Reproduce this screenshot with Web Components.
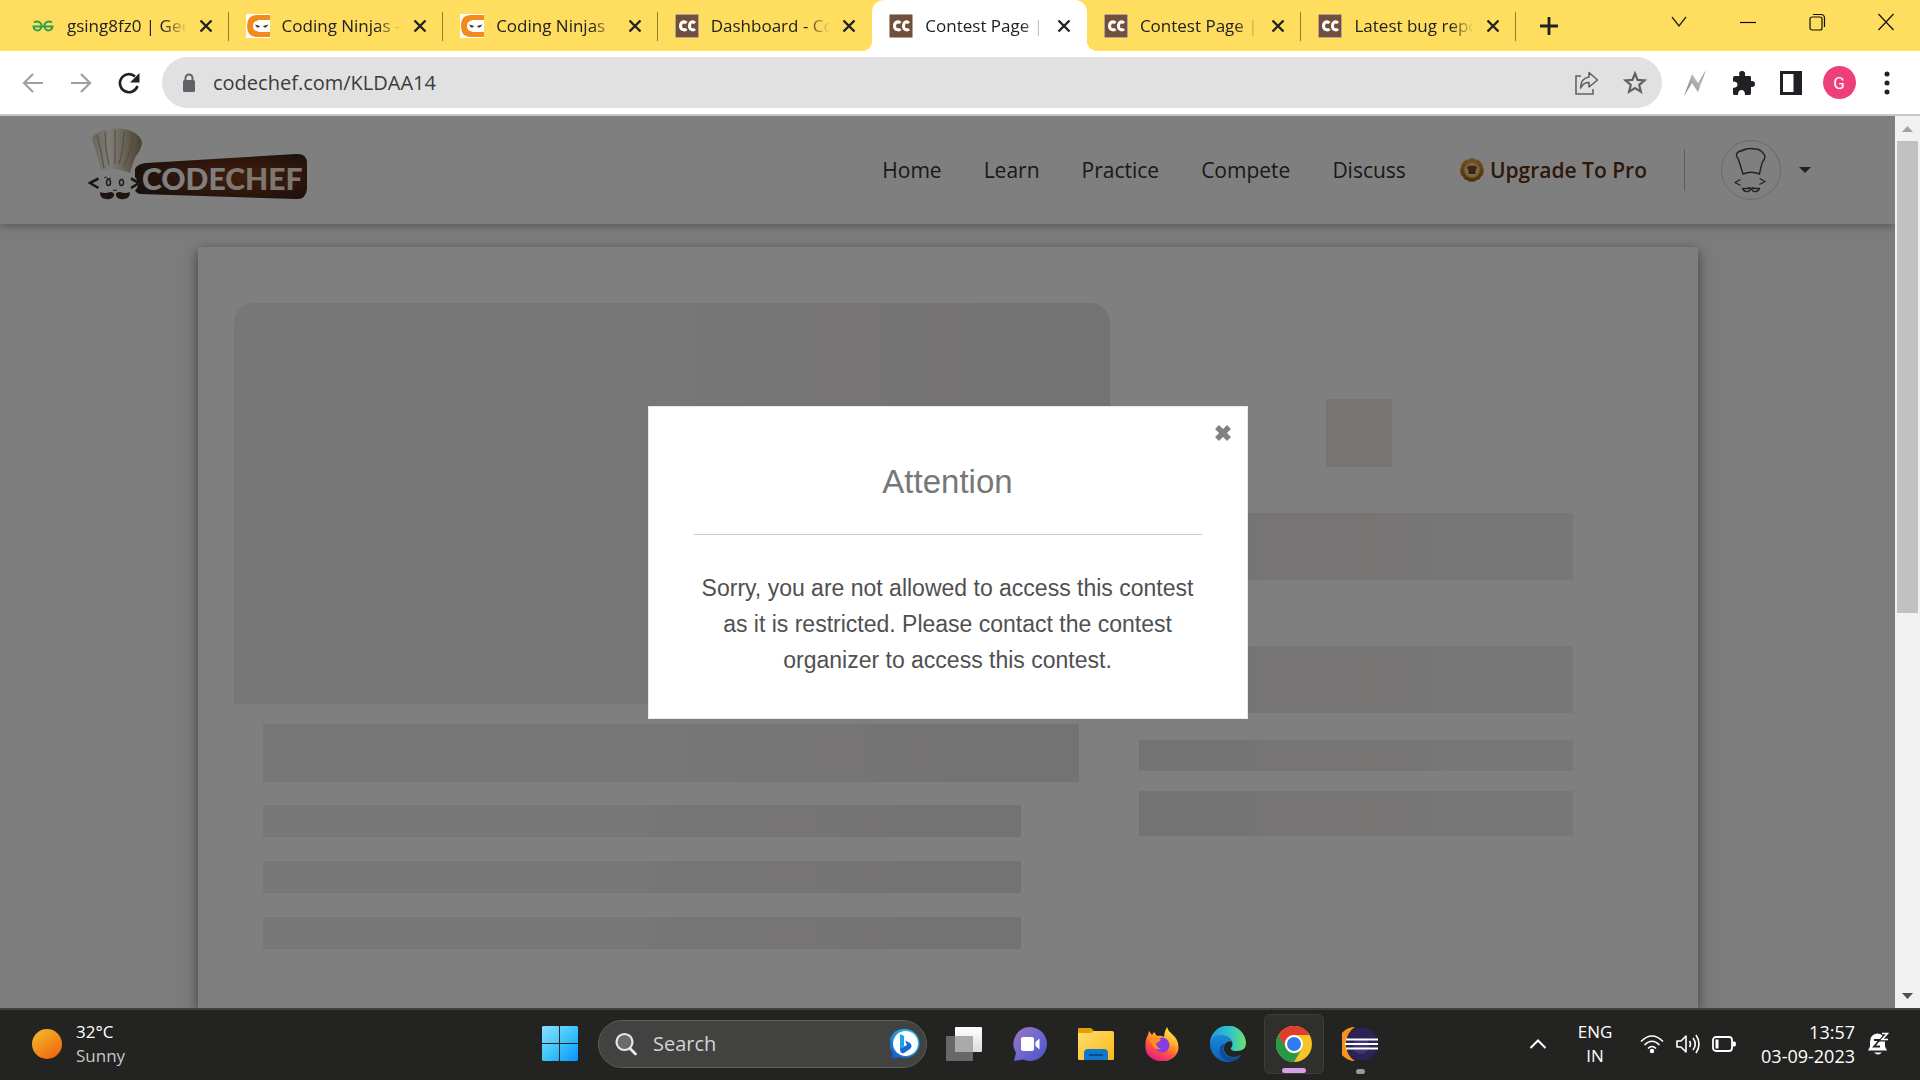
<!DOCTYPE html>
<html lang="en">
<head>
<meta charset="UTF-8">
<meta name="viewport" content="width=device-width, initial-scale=1.0">
<title>Contest Page | CodeChef</title>
<style>
    html, body {
        margin: 0;
        height: 100%;
        overflow: hidden;
    }

    body {
        display: flex;
        flex-direction: column;
        font-family: "Open Sans", "Noto Sans", sans-serif;
        font-size: 17px;
        color: #202124;
    }

    page-view {
        flex: 1;
        min-height: 0;
    }
</style>
</head>
<body>
    <tab-strip>
        <browser-tab icon="geeks">gsing8fz0 | Gee</browser-tab>
        <browser-tab icon="ninja">Coding Ninjas -</browser-tab>
        <browser-tab icon="ninja">Coding Ninjas</browser-tab>
        <browser-tab icon="cc" borderless>Dashboard - Co</browser-tab>
        <browser-tab icon="cc" active>Contest Page |</browser-tab>
        <browser-tab icon="cc">Contest Page |</browser-tab>
        <browser-tab icon="cc">Latest bug repo</browser-tab>
    </tab-strip>
    <browser-toolbar url="codechef.com/KLDAA14"></browser-toolbar>
    <page-view>
        <site-header></site-header>
        <contest-skeleton></contest-skeleton>
        <alert-dialog slot="overlay" titulo="Attention">Sorry, you are not allowed to access this contest as it is restricted. Please contact the contest organizer to access this contest.</alert-dialog>
    </page-view>
    <task-bar></task-bar>

<script>
/* Each entry: width, height, inner markup */
const ICONS = {
    geeks: [24, 24, `
        <g fill="none" stroke="#2f9e4f" stroke-width="2">
            <path d="M3 8.500Q6 6.500 9 8.500Q11 10 10.500 12Q10 16 7 16.500Q3 16.500 2.500 12.500H21.500Q21 16.500 17 16.500Q14 16 13.500 12Q13 10 15 8.500Q18 6.500 21 8.500"/>
        </g>`],
    ninja: [24, 24, `
        <path fill="#fff" d="M0 0h24v24H0z"/>
        <path fill="#f28a1c" d="M24 1H11Q1 1 1 12T11 23h13v-5H12V6h12z"/>
        <path fill="#fff" d="M24 6.500H13Q7 6.500 7 12T13 17.500H24z"/>
        <path fill="#333" d="M9 10.500l5 1.500q-1 2-3 1.500zM22.500 10.500L17 12q1 2 3 1.500z"/>`],
    cc: [24, 24, `
        <rect x=".5" y=".5" width="23" height="23" rx="1" fill="#70503c" stroke="#b7a294"/>
        <g fill="none" stroke="#fff" stroke-width="3">
            <path d="M11.500 9Q10 7.500 8 8Q5.500 9 5.500 12T8 15.500Q10 16.500 11.500 15"/>
            <path d="M20 9Q18.500 7.500 16.500 8Q14.500 9 14.500 12T16.500 15.500Q18.500 16.500 20 15"/>
        </g>`],
    close: [14, 14, `<path d="M1.500 1.500l11 11M12.500 1.500l-11 11" stroke="#202124" stroke-width="2.400"/>`],
    plus: [20, 20, `<path d="M10 1v18M1 10h18" stroke="#202124" stroke-width="2.800"/>`],
    chevron: [16, 12, `<path d="M1 1l7 9 7-9" fill="none" stroke="#202124" stroke-width="1.300"/>`],
    minimize: [16, 16, `<path d="M0 8.500h16" stroke="#111" stroke-width="1.200"/>`],
    restore: [18, 20, `
        <rect x="2" y="5" width="12" height="13" rx="2" fill="none" stroke="#111" stroke-width="1.200"/>
        <path d="M5 2.500h8q3.500 0 3.500 4V15" fill="none" stroke="#111" stroke-width="1.200"/>`],
    exit: [18, 18, `<path d="M1.500 1l15 16M16.500 1l-15 16" stroke="#111" stroke-width="1.200"/>`],
    back: [24, 24, `<path d="M22 12H3M12 3l-9 9 9 9" fill="none" stroke="#a0a0a0" stroke-width="2.200"/>`],
    forward: [24, 24, `<path d="M2 12h19M12 3l9 9-9 9" fill="none" stroke="#a0a0a0" stroke-width="2.200"/>`],
    reload: [24, 24, `
        <path d="M20.500 15A9 9 0 1 1 18 5.500" fill="none" stroke="#202124" stroke-width="2.600"/>
        <path d="M22.500 2v9.500H13z" fill="#202124"/>`],
    lock: [24, 24, `
        <rect x="6" y="9" width="12" height="12" rx="1.500" fill="#5f6368"/>
        <path d="M8.500 9V7a3.500 3.500 0 0 1 7 0v2" fill="none" stroke="#5f6368" stroke-width="2"/>`],
    share: [26, 26, `
        <g fill="none" stroke="#5f6368" stroke-width="1.600">
            <path d="M7 6H2v18h17v-5"/>
            <path d="M15 2.500L23.500 10 15 17v-4.500Q10 12 6.500 18Q7 8 15 7z" stroke-linejoin="round"/>
        </g>`],
    star: [24, 24, `<path d="M12 2.500l2.600 6.400 6.900.5-5.300 4.500 1.700 6.800L12 17l-5.900 3.700 1.700-6.800L2.500 9.400l6.900-.5z" fill="none" stroke="#5f6368" stroke-width="2.200"/>`],
    bolt: [24, 28, `
        <defs><linearGradient id="g" x1="0" y1="1" x2="1" y2="0"><stop offset="0" stop-color="#777"/><stop offset=".6" stop-color="#b8b8b8"/><stop offset="1" stop-color="#888"/></linearGradient></defs>
        <path d="M1 27L9 5l6 9L23 1 15 23l-6-9z" fill="url(#g)"/>`],
    puzzle: [24, 26, `<path d="M4 6h4.500Q7 1 11 1t3 5H19q1 0 1 1.500V11q4-.5 4 3t-4 3v6q0 2-1.500 2H14q0-5-3.500-5T7 25H3.500Q2 25 2 23.500V18q4.500-.5 4.500-3.500T2 11.500V8q0-2 2-2z" fill="#202124"/>`],
    panel: [22, 24, `
        <path d="M0 0h22v24H0z" fill="#202124"/>
        <path d="M3 3h10.500v18H3z" fill="#fff"/>`],
    dots: [6, 24, `<g fill="#202124"><circle cx="3" cy="3" r="2.500"/><circle cx="3" cy="12" r="2.500"/><circle cx="3" cy="21" r="2.500"/></g>`],
    medal: [24, 24, `
        <defs><linearGradient id="g" x1="0" y1="0" x2="0" y2="1"><stop offset="0" stop-color="#f0a040"/><stop offset="1" stop-color="#9a5d10"/></linearGradient></defs>
        <path d="M12 0q2 0 3.500 1.500Q19 1 20.500 4 23 5.500 22.500 8.500 24.500 11 23.500 13.500 24 17 21 18.500 20 22 16.500 22 14.500 24.500 12 23.500 8.500 24.500 7 22 4 22 3 18.500 0 17 .5 13.500-.5 11 1.500 8.500 1 5.500 3.500 4 5 1 8.500 1.500 10 0 12 0z" fill="url(#g)"/>
        <circle cx="12" cy="12" r="8" fill="#e0bb78"/>
        <circle cx="12" cy="12" r="6.500" fill="#f0d8a8"/>
        <path d="M7 9.500q2-3 5-1.500 3-1.500 5 1.500l-1.500 3V16h-7v-3.500z" fill="#7d4a18"/>`],
    chef: [60, 60, `
        <g fill="none" stroke="#444" stroke-width="1.400" stroke-linejoin="round">
            <circle cx="30" cy="30" r="29.500" stroke="#d4d4d4" stroke-width="1"/>
            <path d="M22 34L17.500 19.500Q13 14 18 11.500Q22 10.500 25 9Q30 8 34 9Q39 9 42 13Q46 17 41.500 22Q40 26 38.500 34Q30 30.500 22 34z"/>
            <path d="M19.500 39.500l-5.500 3 5.500 3M38.500 38.500l5.500 3-5.500 3"/>
            <path d="M21.500 48.500h4.500l3-.8q1 2.500-2 3.800-4 .8-5.500-3zM38.500 48.500H34l-3-.8q-1 2.500 2 3.800 4 .8 5.500-3z"/>
        </g>`],
    caret: [12, 6, `<path d="M0 0h12L6 6z" fill="#444"/>`],
    cross: [18, 18, `<path d="M3 3l12 12M15 3L3 15" stroke="#818181" stroke-width="5.500"/>`],
    logo: [220, 74, `
        <defs>
            <radialGradient id="g" cx=".6" cy=".5" r=".6"><stop offset="0" stop-color="#803c1a"/><stop offset=".5" stop-color="#663018"/><stop offset="1" stop-color="#38231a"/></radialGradient>
            <linearGradient id="h"><stop offset="0" stop-color="#d6cdb4"/><stop offset=".35" stop-color="#fbf9f0"/><stop offset=".6" stop-color="#d8cfba"/><stop offset="1" stop-color="#96835e"/></linearGradient>
        </defs>
        <path d="M47 42Q49 37 58 36L208 27Q218 26 219 35V62Q218 72 209 72L52 67Q46 66 47 60z" fill="url(#g)"/>
        <ellipse cx="27" cy="57" rx="23" ry="14" fill="#fff"/>
        <path d="M13 42L5 15Q2 8 11 5Q17 2 27 1.300Q38 1 45 5Q53 9 54 16Q53 23 48 29Q44 37 42 46Q26 39 13 44z" fill="url(#h)"/>
        <path d="M9 8q4 14 7 33M17 5q0 18 4 33M27 3v34M36 5q0 16-5 32M45 7q-2 18-9 32" fill="none" stroke="#a5977a" stroke-width="1"/>
        <g fill="none" stroke="#3b2a25" stroke-width="2.600"><path d="M10.500 51.500L2 56l8.500 5M43 51.500l8 4.500-8 5"/></g>
        <g fill="#fff" stroke="#3b3735" stroke-width="1.500"><ellipse cx="20.500" cy="55.500" rx="2" ry="3"/><ellipse cx="33.500" cy="55.500" rx="2" ry="3"/></g>
        <path d="M16 51q2-2 3 0t4 0M25 63q2 1 4 0" fill="none" stroke="#3b3735"/>
        <path d="M12 65q5 2 10 0 5 0 4 4-3 4-8 3-6 0-6-7zM42 65q-5 2-10 0-5 0-4 4 3 4 8 3 6 0 6-7z" fill="#3d2620"/>
        <text x="54" y="63" font-family="Lato, sans-serif" font-weight="900" font-size="30" fill="#fff">CODE<tspan fill="#f6f3df">CHEF</tspan></text>`],
    sun: [30, 30, `
        <defs><linearGradient id="g" x1="0" y1="0" x2=".7" y2="1"><stop offset="0" stop-color="#f2c02e"/><stop offset="1" stop-color="#f2680f"/></linearGradient></defs>
        <circle cx="15" cy="15" r="15" fill="url(#g)"/>`],
    windows: [36, 36, `
        <defs><linearGradient id="g" x1="0" y1="0" x2="1" y2="1"><stop offset="0" stop-color="#8ce0ff"/><stop offset=".5" stop-color="#40c4fb"/><stop offset="1" stop-color="#0494fb"/></linearGradient></defs>
        <path d="M1 0h16v17H0V1zM18 0h17l1 1v16H18zM0 18h17v17H1l-1-1zM18 18h18v16l-1 1H18z" fill="url(#g)"/>`],
    magnifier: [24, 24, `
        <circle cx="10.500" cy="10" r="8" fill="#6a6a6a" stroke="#e6e9f0" stroke-width="2.200"/>
        <path d="M16 16.500l5.500 5.500" stroke="#e6e9f0" stroke-width="2.800" stroke-linecap="round"/>`],
    bing: [30, 30, `
        <defs><linearGradient id="g" x1="1" y1="0" x2="0" y2="1"><stop offset="0" stop-color="#2fd0f2"/><stop offset="1" stop-color="#0f52cf"/></linearGradient></defs>
        <path d="M15 0a15 14.500 0 1 1-6 28Q5 30 1 29q2-3 1-6A15 14.500 0 0 1 15 0z" fill="url(#g)"/>
        <circle cx="15.500" cy="14.500" r="12.500" fill="#fff"/>
        <path d="M10 5l4 2v10l-4 4z" fill="#1ba4ee"/>
        <path d="M10 20l5-3 2-1-2-4.500 5 2.500q3 3 0 6l-6 4q-4 1-4-4z" fill="#1768d8"/>`],
    taskview: [36, 34, `
        <defs><linearGradient id="g" x1="0" y1="0" x2="0" y2="1"><stop offset="0" stop-color="#fff"/><stop offset="1" stop-color="#dcdcdc"/></linearGradient></defs>
        <rect x="0" y="9" width="27" height="25" rx="1" fill="#686868"/>
        <rect x="9" y="0" width="27" height="25" rx="1" fill="url(#g)"/>
        <path d="M9 9h18v16H9z" fill="#aaa"/>`],
    chat: [34, 34, `
        <defs><linearGradient id="g" x1="0" y1="0" x2="1" y2="1"><stop offset="0" stop-color="#a573c0"/><stop offset=".5" stop-color="#6f68cf"/><stop offset="1" stop-color="#4a52c4"/></linearGradient></defs>
        <path d="M17 0a17 17 0 1 1-7 32.500L1 34l2-8A17 17 0 0 1 17 0z" fill="url(#g)"/>
        <rect x="8" y="10" width="13" height="14" rx="2" fill="#fff"/>
        <path d="M22.500 15l4-3.500v11l-4-3.500z" fill="#fff"/>`],
    folder: [36, 34, `
        <defs><linearGradient id="g" x1="0" y1="0" x2="1" y2="1"><stop offset="0" stop-color="#ffdc72"/><stop offset="1" stop-color="#fcb913"/></linearGradient></defs>
        <path d="M0 6V2q0-1 1-1h12l3 3v4z" fill="#e3a008"/>
        <path d="M0 6h13l3-2h18q2 0 2 2v26q0 1-1 1H1q-1 0-1-1z" fill="url(#g)"/>
        <path d="M6 33v-7q0-4 4-4h16q4 0 4 4v7z" fill="#1178cc"/>
        <path d="M11 28h14" stroke="#0b4d8c" stroke-width="2"/>`],
    firefox: [34, 34, `
        <defs>
            <linearGradient id="g" x1=".8" y1="0" x2=".3" y2="1"><stop offset="0" stop-color="#fff04a"/><stop offset=".35" stop-color="#ffb42e"/><stop offset=".65" stop-color="#ff5a38"/><stop offset="1" stop-color="#e3178a"/></linearGradient>
        </defs>
        <path d="M22 0q1 4 5 7 7 6 6.500 14A16.500 14 0 0 1 .5 20Q0 12 3 8l1-4 3 4 2-3 3 4q4-1 7 1 0-5 3-10z" fill="url(#g)"/>
        <circle cx="17" cy="18" r="7.500" fill="#8a3be2"/>
        <path d="M3 11q6-3 13 1-1 3-5 4 0 4 5 6-7 2-9-5z" fill="#ff8d1f"/>`],
    edge: [36, 36, `
        <defs>
            <linearGradient id="g"><stop offset="0" stop-color="#1c9ade"/><stop offset=".6" stop-color="#32c6c8"/><stop offset="1" stop-color="#6fe068"/></linearGradient>
            <linearGradient id="h" x1="0" y1="0" x2="0" y2="1"><stop offset="0" stop-color="#1a8ad8"/><stop offset="1" stop-color="#0e5fb5"/></linearGradient>
        </defs>
        <path d="M0 18A18 18 0 0 1 36 17q0 8-9 8-7 0-6-3 3-4 0-8Q13 6 4 12z" fill="url(#g)"/>
        <path d="M0 18Q1 9 11 9q9 0 11 7-4-2-7 2-3 6 2 11 6 4 14 0Q25 36 18 36A18 18 0 0 1 0 18z" fill="url(#h)"/>
        <path d="M15 18q-4 7 2 12 6 4 15-1-6 8-15 6Q8 31 10 22q1-4 5-4z" fill="#124d91"/>`],
    chrome: [36, 36, `
        <circle cx="18" cy="18" r="18" fill="#f7c325"/>
        <path d="M2.400 9A18 18 0 0 1 33.600 9H18a9 9 0 0 0-8 13.500z" fill="#e23c2e"/>
        <path d="M2.400 9A18 18 0 0 0 18 36l8-13.500a9 9 0 0 1-15.800 0z" fill="#279847"/>
        <circle cx="18" cy="18" r="9" fill="#fff"/>
        <circle cx="18" cy="18" r="7" fill="#2d7df0"/>`],
    eclipse: [36, 34, `
        <path d="M13 0A17 17 0 0 0 13 34Q4 28 4 17T13 0z" fill="#f7941e"/>
        <ellipse cx="20" cy="17" rx="16" ry="16.500" fill="#2c2255"/>
        <circle cx="19" cy="19" r="8" fill="#41357a"/>
        <path d="M4 12.500h32M3 17h33M4 21.500h32" stroke="#fff" stroke-width="1.800"/>`],
    up: [18, 12, `<path d="M1.500 10L9 2.500l7.500 7.500" fill="none" stroke="#fff" stroke-width="2"/>`],
    wifi: [24, 20, `
        <g fill="none" stroke="#fff" stroke-width="1.600"><path d="M1 7.500q11-11 22 0M4.500 11q7.500-7.500 15 0M8 14.500q4-4 8 0"/></g>
        <circle cx="12" cy="17" r="2.200" fill="#fff"/>`],
    speaker: [24, 20, `<g fill="none" stroke="#fff" stroke-width="1.600" stroke-linejoin="round"><path d="M1 7h4l5-5v16l-5-5H1zM13.500 7q2 3 0 6M17 4q4.500 6 0 12M20 1q6 9 0 18"/></g>`],
    battery: [24, 18, `
        <rect x="1" y="2" width="19" height="14" rx="3" fill="none" stroke="#fff" stroke-width="1.800"/>
        <path d="M3.500 4.500h3v9h-3zM21 6.500h1.500q1.500 0 1.500 2.500t-1.500 2.500H21z" fill="#fff"/>`],
    bell: [22, 26, `
        <path d="M1 19.500l2-4V11q0-8 7.500-8.500Q18 3 18 11v4.500l2 4z" fill="#fff"/>
        <path d="M7 21.500h8q-4 4-8 0z" fill="#fff"/>
        <path d="M7 9h5.500L7 15.500h6" fill="none" stroke="#232321" stroke-width="1.800"/>
        <path d="M15 2.500h5.500L15 8.500h6" fill="none" stroke="#232321" stroke-width="4"/>
        <path d="M15 2.500h5.500L15 8.500h6" fill="none" stroke="#fff" stroke-width="1.600"/>`],
    scrollUp: [11, 6, `<path d="M0 6h11L5.500 0z" fill="#a3a3a3"/>`],
    scrollDown: [11, 6, `<path d="M0 0h11L5.500 6z" fill="#505050"/>`]
};

class UiIcon extends HTMLElement {
    constructor() {
        super();
        this.attachShadow({ mode: "open" });
    }

    connectedCallback() {
        const [w, h, markup] = ICONS[this.getAttribute("name")];
        this.shadowRoot.innerHTML = `
            <style>
                :host { display: block; flex: none; }
                svg { display: block; }
            </style>
            <svg width="${w}" height="${h}" viewBox="0 0 ${w} ${h}" aria-hidden="true">${markup}</svg>
        `;
    }
}
customElements.define("ui-icon", UiIcon);

/* Shared reset for the flat buttons inside each shadow root */
const BUTTON_CSS = `
    button {
        display: flex;
        align-items: center;
        justify-content: center;
        flex: none;
        margin: 0;
        padding: 0;
        border: none;
        background: none;
        font: inherit;
        color: inherit;
        cursor: pointer;
    }
`;

class BrowserTab extends HTMLElement {
    constructor() {
        super();
        const shadow = this.attachShadow({ mode: "open" });
        const icon = this.getAttribute("icon");

        shadow.innerHTML = `
            <style>
                ${BUTTON_CSS}
                :host {
                    display: flex;
                    flex: 1;
                    min-width: 0;
                    box-sizing: border-box;
                    align-items: center;
                    gap: 12px;
                    padding: 0 16px 0 17px;
                    position: relative;
                }

                /* separator on the right edge */
                :host::after {
                    content: "";
                    position: absolute;
                    right: 0;
                    top: 12px;
                    bottom: 10px;
                    width: 1px;
                    background: #8f7c35;
                }
                :host([borderless])::after { display: none; }

                .title {
                    flex: 1;
                    min-width: 0;
                    overflow: hidden;
                    white-space: nowrap;
                    -webkit-mask-image: linear-gradient(to left, transparent, #000 24px);
                    mask-image: linear-gradient(to left, transparent, #000 24px);
                }

                :host([active]) {
                    background: #fff;
                    border-radius: 12px 12px 0 0;
                }
                :host([active])::before,
                :host([active])::after {
                    content: "";
                    position: absolute;
                    top: auto;
                    bottom: 0;
                    width: 10px;
                    height: 10px;
                }
                :host([active])::before {
                    left: -10px;
                    background: radial-gradient(circle at 0 0, transparent 10px, #fff 10px);
                }
                :host([active])::after {
                    right: -10px;
                    background: radial-gradient(circle at 100% 0, transparent 10px, #fff 10px);
                }
            </style>
            <ui-icon name="${icon}"></ui-icon>
            <span class="title"><slot></slot></span>
            <button aria-label="Close tab"><ui-icon name="close"></ui-icon></button>
        `;
    }
}
customElements.define("browser-tab", BrowserTab);

class TabStrip extends HTMLElement {
    constructor() {
        super();
        const shadow = this.attachShadow({ mode: "open" });
        shadow.innerHTML = `
            <style>
                ${BUTTON_CSS}
                :host {
                    display: flex;
                    height: 51px;
                    padding-left: 14px;
                    background: #ffdd5e;
                }
                .tabs {
                    display: flex;
                    flex: 0 1 1502px;
                    min-width: 0;
                }
                .new { width: 66px; }
                .window {
                    display: flex;
                    height: 44px;
                    margin-left: auto;
                }
                .window button { width: 69px; }
            </style>
            <div class="tabs"><slot></slot></div>
            <button class="new" aria-label="New tab"><ui-icon name="plus"></ui-icon></button>
            <div class="window">
                <button aria-label="Search tabs"><ui-icon name="chevron"></ui-icon></button>
                <button aria-label="Minimize"><ui-icon name="minimize"></ui-icon></button>
                <button aria-label="Restore"><ui-icon name="restore"></ui-icon></button>
                <button aria-label="Close"><ui-icon name="exit"></ui-icon></button>
            </div>
        `;
    }
}
customElements.define("tab-strip", TabStrip);

class BrowserToolbar extends HTMLElement {
    constructor() {
        super();
        const shadow = this.attachShadow({ mode: "open" });
        const url = this.getAttribute("url") || "";

        shadow.innerHTML = `
            <style>
                ${BUTTON_CSS}
                :host {
                    display: flex;
                    align-items: center;
                    padding: 6px 9px;
                    background: #fff;
                    border-bottom: 2px solid #c8c8c8;
                }
                button { width: 48px; height: 48px; }
                .omnibox {
                    display: flex;
                    flex: 1;
                    align-items: center;
                    height: 51px;
                    margin: 0 9px;
                    padding: 0 3px 0 15px;
                    box-sizing: border-box;
                    border-radius: 26px;
                    background: #e1e1e1;
                }
                input {
                    flex: 1;
                    min-width: 0;
                    padding: 0 0 0 12px;
                    border: none;
                    outline: none;
                    background: none;
                    font: inherit;
                    font-size: 20px;
                    color: #3a3c40;
                }
                .avatar {
                    display: flex;
                    align-items: center;
                    justify-content: center;
                    width: 33px;
                    height: 33px;
                    border-radius: 50%;
                    background: #ee3f7a;
                    color: #fff;
                    font-family: Roboto, sans-serif;
                    font-size: 17px;
                }
            </style>
            <button aria-label="Back"><ui-icon name="back"></ui-icon></button>
            <button aria-label="Forward"><ui-icon name="forward"></ui-icon></button>
            <button aria-label="Reload"><ui-icon name="reload"></ui-icon></button>
            <div class="omnibox">
                <ui-icon name="lock"></ui-icon>
                <input type="text" aria-label="Address" value="${url}" spellcheck="false">
                <button aria-label="Share"><ui-icon name="share"></ui-icon></button>
                <button aria-label="Bookmark"><ui-icon name="star"></ui-icon></button>
            </div>
            <button aria-label="Extension"><ui-icon name="bolt"></ui-icon></button>
            <button aria-label="Extensions"><ui-icon name="puzzle"></ui-icon></button>
            <button aria-label="Side panel"><ui-icon name="panel"></ui-icon></button>
            <button aria-label="Profile"><span class="avatar">G</span></button>
            <button aria-label="Menu"><ui-icon name="dots"></ui-icon></button>
        `;
    }
}
customElements.define("browser-toolbar", BrowserToolbar);

/* Page area: content, dimmed overlay and scrollbar */
class PageView extends HTMLElement {
    constructor() {
        super();
        const shadow = this.attachShadow({ mode: "open" });
        shadow.innerHTML = `
            <style>
                ${BUTTON_CSS}
                :host { display: flex; }
                .page {
                    position: relative;
                    display: flex;
                    flex-direction: column;
                    flex: 1;
                    min-width: 0;
                    overflow: hidden;
                    background: #f8f8f8;
                }
                .overlay {
                    position: absolute;
                    inset: 0;
                    display: flex;
                    align-items: center;
                    justify-content: center;
                    background: rgba(0, 0, 0, 0.5);
                }
                .scroll {
                    display: flex;
                    flex-direction: column;
                    width: 25px;
                    background: #f1f1f1;
                }
                .scroll button { height: 25px; width: 100%; }
                .track { flex: 1; padding: 0 2px; }
                .thumb { height: 56%; background: #c1c1c1; }
            </style>
            <div class="page">
                <slot></slot>
                <div class="overlay"><slot name="overlay"></slot></div>
            </div>
            <div class="scroll">
                <button aria-label="Scroll up"><ui-icon name="scrollUp"></ui-icon></button>
                <div class="track"><div class="thumb"></div></div>
                <button aria-label="Scroll down"><ui-icon name="scrollDown"></ui-icon></button>
            </div>
        `;
    }
}
customElements.define("page-view", PageView);

class SiteHeader extends HTMLElement {
    constructor() {
        super();
        const shadow = this.attachShadow({ mode: "open" });
        shadow.innerHTML = `
            <style>
                ${BUTTON_CSS}
                :host {
                    display: flex;
                    align-items: center;
                    flex: none;
                    height: 108px;
                    padding: 0 84px 0 88px;
                    background: #fff;
                    box-shadow: 0 2px 8px rgba(0, 0, 0, 0.3);
                    font-size: 21px;
                }
                a { color: #333; text-decoration: none; }
                .logo { padding-bottom: 12px; }
                nav {
                    display: flex;
                    gap: 42px;
                    margin-left: auto;
                }
                .pro {
                    display: flex;
                    align-items: center;
                    gap: 6px;
                    margin-left: 54px;
                    color: #5b2f14;
                    font-weight: 600;
                }
                .rule {
                    width: 1px;
                    height: 42px;
                    margin: 0 36px 0 37px;
                    background: #bbb;
                }
                .account { gap: 18px; }
            </style>
            <a class="logo" href="#" aria-label="CodeChef"><ui-icon name="logo"></ui-icon></a>
            <nav>
                <a href="#">Home</a>
                <a href="#">Learn</a>
                <a href="#">Practice</a>
                <a href="#">Compete</a>
                <a href="#">Discuss</a>
            </nav>
            <a class="pro" href="#"><ui-icon name="medal"></ui-icon>Upgrade To Pro</a>
            <span class="rule"></span>
            <button class="account" aria-label="Account"><ui-icon name="chef"></ui-icon><ui-icon name="caret"></ui-icon></button>
        `;
    }
}
customElements.define("site-header", SiteHeader);

class ContestSkeleton extends HTMLElement {
    constructor() {
        super();
        const shadow = this.attachShadow({ mode: "open" });
        shadow.innerHTML = `
            <style>
                :host {
                    display: grid;
                    grid-template-columns: 876px 434px;
                    gap: 29px;
                    align-content: start;
                    flex: 1 0 auto;
                    box-sizing: border-box;
                    width: 1500px;
                    max-width: 100%;
                    margin: 23px auto 0;
                    padding: 56px 36px 0;
                    background: #fff;
                    box-shadow: 0 4px 12px rgba(0, 0, 0, 0.5);
                }
                div div {
                    background: linear-gradient(90deg, #eee 50%, #ede9e9 68%, #eae7e7 80%, #e7e7e7);
                }
                .main { display: flex; flex-direction: column; }
                .banner { height: 401px; border-radius: 20px 20px 0 0; }
                .heading { height: 58px; margin: 20px 31px 23px 29px; }
                .line { height: 32px; margin: 0 89px 24px 29px; }

                .side { display: flex; flex-direction: column; padding-top: 96px; }
                .side div { background: linear-gradient(90deg, #e8e8e8, #ece8e8 30%, #eee9e9 55%, #eee 70%); }
                .side .badge { width: 66px; height: 68px; margin: 0 0 46px 187px; background: #eee9e9; }
                .side .tall { height: 67px; margin-bottom: 66px; }
                .side .thin { height: 31px; margin: -39px 0 20px; }
                .side .mid { height: 45px; }
            </style>
            <div class="main">
                <div class="banner"></div>
                <div class="heading"></div>
                <div class="line"></div>
                <div class="line"></div>
                <div class="line"></div>
            </div>
            <div class="side">
                <div class="badge"></div>
                <div class="tall"></div>
                <div class="tall"></div>
                <div class="thin"></div>
                <div class="mid"></div>
            </div>
        `;
    }
}
customElements.define("contest-skeleton", ContestSkeleton);

class AlertDialog extends HTMLElement {
    constructor() {
        super();
        const shadow = this.attachShadow({ mode: "open" });
        const titulo = this.getAttribute("titulo") || "";

        shadow.innerHTML = `
            <style>
                ${BUTTON_CSS}
                :host { display: block; width: 600px; max-width: 100%; }
                dialog {
                    position: relative;
                    width: auto;
                    margin: 0;
                    padding: 53px 45px 40px;
                    border: 1px solid #e8e8e8;
                    background: #fff;
                    font-family: "Liberation Sans", Arial, sans-serif;
                    text-align: center;
                }
                h2 {
                    margin: 0;
                    padding-bottom: 30px;
                    border-bottom: 1px solid #ccc;
                    font-size: 33px;
                    font-weight: 400;
                    line-height: 44px;
                    color: #777;
                }
                p {
                    margin: 35px 0 0;
                    font-size: 23px;
                    line-height: 36px;
                    color: #505050;
                }
                button {
                    position: absolute;
                    top: 17px;
                    right: 15px;
                }
            </style>
            <dialog open aria-labelledby="titulo">
                <button aria-label="Close"><ui-icon name="cross"></ui-icon></button>
                <h2 id="titulo">${titulo}</h2>
                <p><slot></slot></p>
            </dialog>
        `;
    }

    connectedCallback() {
        this.shadowRoot.querySelector("button").addEventListener("click", () => this.remove());
    }
}
customElements.define("alert-dialog", AlertDialog);

class TaskBar extends HTMLElement {
    constructor() {
        super();
        const shadow = this.attachShadow({ mode: "open" });
        shadow.innerHTML = `
            <style>
                ${BUTTON_CSS}
                :host {
                    display: grid;
                    grid-template-columns: 1fr auto 1fr;
                    align-items: center;
                    flex: none;
                    height: 72px;
                    box-sizing: border-box;
                    padding-bottom: 2px;
                    border-top: 2px solid #3f3f3d;
                    background: #232321;
                    color: #fff;
                    font-size: 18px;
                    line-height: 24px;
                }
                .weather {
                    justify-self: start;
                    gap: 14px;
                    padding-left: 32px;
                    font-size: 17px;
                    text-align: left;
                }
                .weather span { display: block; }
                .weather .sky { color: #c8c8c8; }

                .center { display: flex; align-items: center; }
                .app {
                    position: relative;
                    width: 66px;
                    height: 60px;
                }
                .search {
                    display: flex;
                    align-items: center;
                    gap: 15px;
                    width: 329px;
                    height: 48px;
                    box-sizing: border-box;
                    margin: 0 4px 0 5px;
                    padding: 0 6px 0 15px;
                    border: 1px solid #5d5d5d;
                    border-radius: 24px;
                    background: #424241;
                }
                input {
                    flex: 1;
                    min-width: 0;
                    padding: 0;
                    border: none;
                    outline: none;
                    background: none;
                    font: inherit;
                    font-size: 20px;
                    color: #fff;
                }
                input::placeholder { color: #d4d4d4; opacity: 1; }

                /* running / focused apps */
                .focused {
                    width: 60px;
                    margin: 0 3px;
                    box-sizing: border-box;
                    border: 1px solid #3d3d3c;
                    border-radius: 6px;
                    background: #2f2f2e;
                }
                .focused::after, .running::after {
                    content: "";
                    position: absolute;
                    bottom: 0;
                    width: 24px;
                    height: 5px;
                    border-radius: 3px;
                    background: #d9a0e3;
                }
                .running::after { width: 9px; background: #9a9a9a; }

                .tray {
                    display: flex;
                    align-items: center;
                    justify-self: end;
                    padding-right: 31px;
                }
                .tray .lang { width: 66px; font-size: 17px; text-align: center; }
                .tray .status { gap: 12px; padding: 0 12px; }
                .tray .more { width: 48px; height: 48px; }
                .tray .clock { gap: 12px; padding-left: 13px; text-align: right; }
            </style>
            <button class="weather">
                <ui-icon name="sun"></ui-icon>
                <span><span>32°C</span><span class="sky">Sunny</span></span>
            </button>
            <div class="center">
                <button class="app" aria-label="Start"><ui-icon name="windows"></ui-icon></button>
                <label class="search">
                    <ui-icon name="magnifier"></ui-icon>
                    <input type="search" placeholder="Search" aria-label="Search">
                    <ui-icon name="bing"></ui-icon>
                </label>
                <button class="app" aria-label="Task view"><ui-icon name="taskview"></ui-icon></button>
                <button class="app" aria-label="Chat"><ui-icon name="chat"></ui-icon></button>
                <button class="app" aria-label="File Explorer"><ui-icon name="folder"></ui-icon></button>
                <button class="app" aria-label="Firefox"><ui-icon name="firefox"></ui-icon></button>
                <button class="app" aria-label="Edge"><ui-icon name="edge"></ui-icon></button>
                <button class="app focused" aria-label="Chrome"><ui-icon name="chrome"></ui-icon></button>
                <button class="app running" aria-label="Eclipse"><ui-icon name="eclipse"></ui-icon></button>
            </div>
            <div class="tray">
                <button class="more" aria-label="Hidden icons"><ui-icon name="up"></ui-icon></button>
                <button class="lang">ENG<br>IN</button>
                <button class="status" aria-label="Network, sound, battery">
                    <ui-icon name="wifi"></ui-icon>
                    <ui-icon name="speaker"></ui-icon>
                    <ui-icon name="battery"></ui-icon>
                </button>
                <button class="clock"><span>13:57<br>03-09-2023</span><ui-icon name="bell"></ui-icon></button>
            </div>
        `;
    }
}
customElements.define("task-bar", TaskBar);
</script>
</body>
</html>
